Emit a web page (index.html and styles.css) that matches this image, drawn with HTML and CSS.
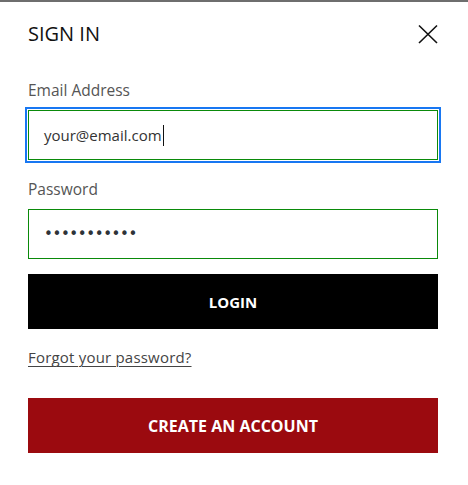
FILE: index.html
```html
<!DOCTYPE html>
<html lang="en">
<head>
<meta charset="utf-8">
<title>Sign in</title>
<link rel="stylesheet" href="styles.css">
</head>
<body>
<div class="modal">
  <div class="modal-header">
    <h2 class="title">SIGN IN</h2>
    <button class="close" aria-label="Close">
      <svg width="20" height="20" viewBox="0 0 20 20" aria-hidden="true">
        <path d="M1 1.5 L19 19 M19 1.5 L1 19" stroke="#111" stroke-width="1.6" fill="none"/>
      </svg>
    </button>
  </div>
  <form class="form">
    <div class="field">
      <label class="label">Email Address</label>
      <div class="input input-focused"><span class="value">your@email.com</span><span class="caret"></span></div>
    </div>
    <div class="field field-second">
      <label class="label" for="pw">Password</label>
      <input class="input input-password" id="pw" type="password" value="abcdefghijk">
    </div>
    <button type="button" class="btn btn-login">LOGIN</button>
    <a class="forgot" href="#">Forgot your password?</a>
    <button type="button" class="btn btn-create">CREATE AN ACCOUNT</button>
  </form>
</div>
</body>
</html>
```

FILE: styles.css
```css
html, body {
  margin: 0;
  padding: 0;
  background: #fff;
}
body {
  border-top: 2px solid #6e6e6e;
  font-family: "Open Sans", "Liberation Sans", sans-serif;
  color: #333;
}
.modal {
  padding: 18px 30px 0 28px;
}
.modal-header {
  display: flex;
  justify-content: space-between;
  align-items: center;
  height: 28px;
}
.title {
  margin: 0;
  font-size: 20px;
  line-height: 28px;
  font-weight: 400;
  color: #111;
}
.close {
  border: 0;
  background: none;
  padding: 0;
  width: 20px;
  height: 20px;
  display: flex;
}
.form {
  display: flex;
  flex-direction: column;
  margin-top: 32px;
}
.field {
  display: flex;
  flex-direction: column;
}
.field-second {
  margin-top: 19px;
}
.label {
  font-size: 15.5px;
  line-height: 20px;
  color: #555;
  margin-bottom: 10px;
}
.input {
  box-sizing: border-box;
  height: 50px;
  border: 1px solid #0a8a0a;
  padding: 0 0 0 15px;
  font-family: "Open Sans", "Liberation Sans", sans-serif;
  font-size: 15px;
  color: #333;
  background: #fff;
  display: flex;
  align-items: center;
  margin: 0;
  outline: none;
}
.input-focused {
  outline: 2px solid #1877f2;
  outline-offset: 1px;
}
.caret {
  display: inline-block;
  width: 1px;
  height: 21px;
  background: #111;
  margin-left: 1px;
}
.input-password {
  width: 100%;
  padding-left: 15px;
  font-family: "DejaVu Sans", sans-serif;
  font-size: 15px;
  letter-spacing: -0.4px;
  color: #2e3338;
}
.btn {
  box-sizing: border-box;
  border: 0;
  height: 55px;
  width: 100%;
  font-family: "Open Sans", "Liberation Sans", sans-serif;
  font-weight: 700;
  color: #fff;
  padding: 0;
}
.btn-login {
  margin-top: 15px;
  background: #000;
  font-size: 15px;
}
.forgot {
  align-self: flex-start;
  margin-top: 18px;
  font-size: 15px;
  line-height: 20px;
  letter-spacing: 0.2px;
  color: #444;
  text-decoration: underline;
  text-decoration-color: #444;
  text-underline-offset: 3px;
  text-decoration-thickness: 1px;
}
.btn-create {
  margin-top: 31px;
  background: #9b0a0f;
  font-size: 16px;
}
```
